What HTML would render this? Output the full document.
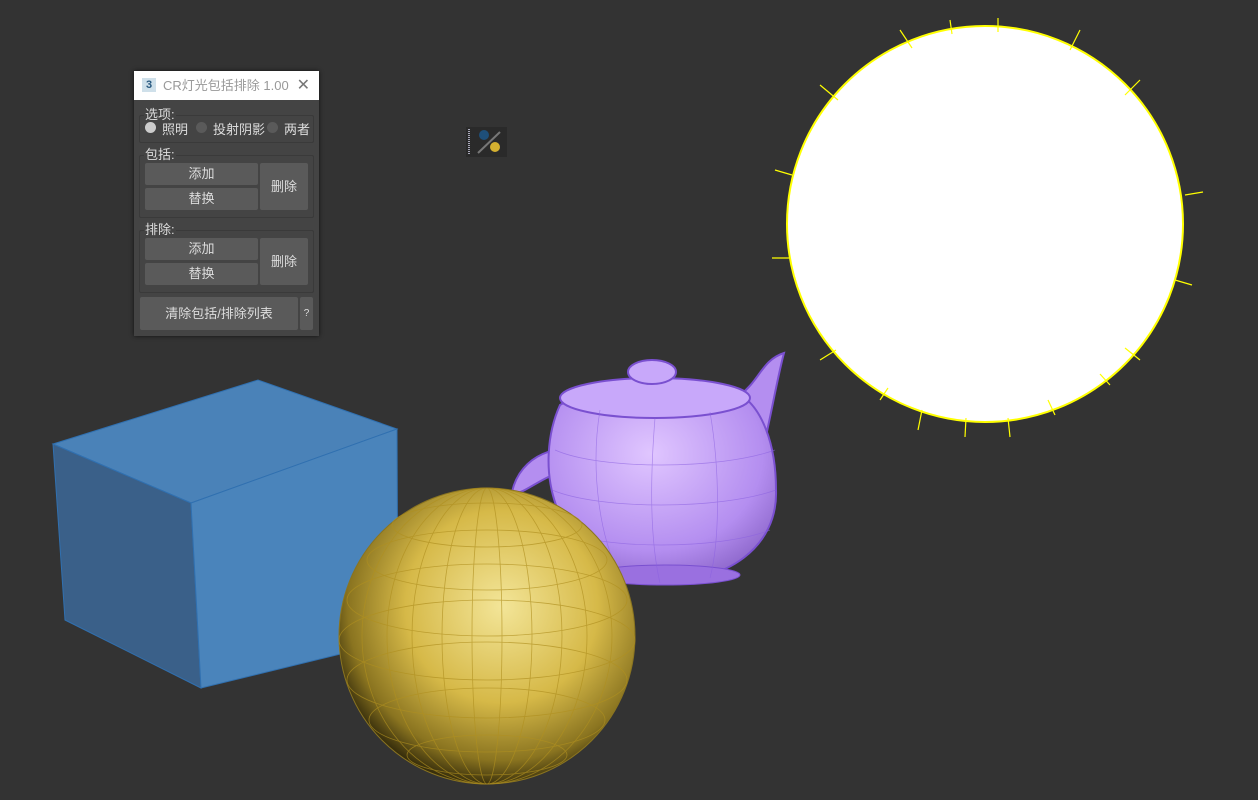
<!DOCTYPE html>
<html><head><meta charset="utf-8"><style>
body{margin:0;width:1258px;height:800px;background:#333;overflow:hidden;position:relative;font-family:"Liberation Sans","Noto Sans CJK SC",sans-serif}
svg{position:absolute;left:0;top:0}
.dlg{position:absolute;left:134px;top:71px;width:185px;height:265px;background:#444;box-shadow:0 0 4px #111}
.tb{height:29px;background:#fff;color:#999;font-size:13px;line-height:29px;position:relative}
.tb .ic{position:absolute;left:8px;top:7px;width:14px;height:14px;background:#cfe0ea;color:#2a5a80;font-size:11px;font-weight:bold;line-height:14px;text-align:center}
.tb .t{position:absolute;left:29px}
.tb .x{position:absolute;right:9px;top:0;color:#777;font-size:16px}
.g{position:absolute;border:1px solid #3a3a3a;border-radius:2px;left:5px;width:173px}
.lb{position:absolute;color:#ddd;font-size:13px;background:#444;padding:0 1px}
.b{position:absolute;background:#5a5a5a;color:#ddd;font-size:13px;text-align:center;border-radius:2px}
.r{position:absolute;width:11px;height:11px;border-radius:50%;background:#5a5a5a;top:51px}
.rt{position:absolute;color:#ddd;font-size:13px;top:48px}
</style></head><body>
<svg width="1258" height="800">
<defs>
<radialGradient id="ys" cx="0.55" cy="0.4" r="0.65"><stop offset="0" stop-color="#f3e598"/><stop offset="0.5" stop-color="#d6b948"/><stop offset="0.8" stop-color="#8a7420"/><stop offset="1" stop-color="#0f0c02"/></radialGradient>
<radialGradient id="pp" cx="0.45" cy="0.35" r="0.7"><stop offset="0" stop-color="#e0c6ff"/><stop offset="0.7" stop-color="#b48ef0"/><stop offset="1" stop-color="#8a64c8"/></radialGradient>
</defs>
<polygon points="53,444 258,380 397,429 191,503" fill="#4a82b8" stroke="#3070b0"/>
<polygon points="53,444 191,503 201,688 65,620" fill="#3a6089" stroke="#3070b0"/>
<polygon points="191,503 397,429 398,640 201,688" fill="#4a84bb" stroke="#3070b0"/>
<!-- teapot -->
<path d="M740,395 C760,380 762,360 784,353 C778,375 772,410 764,445" fill="#b48ef0" stroke="#7a50d0" stroke-width="2"/>
<path d="M590,455 C560,440 520,455 512,492 C522,498 540,475 570,470 Z" fill="#b48ef0" stroke="#7a50d0" stroke-width="2"/>
<path d="M560,405 C535,460 545,560 650,582 C730,585 778,545 776,490 C776,440 760,410 745,398 C700,378 600,380 560,405 Z" fill="url(#pp)" stroke="#7a50d0" stroke-width="2"/>
<ellipse cx="655" cy="398" rx="95" ry="20" fill="#c8a8fa" stroke="#7a50d0" stroke-width="2"/>
<ellipse cx="652" cy="372" rx="24" ry="12" fill="#c8a8fa" stroke="#7a50d0" stroke-width="2"/>
<ellipse cx="665" cy="575" rx="75" ry="10" fill="#9a70e0" stroke="#7a50d0"/>
<g stroke="#8a60e0" stroke-width="0.7" fill="none" opacity="0.6">
<path d="M555,450 C600,470 720,470 775,450"/><path d="M552,490 C600,510 720,510 776,490"/><path d="M560,530 C600,550 720,550 770,530"/>
<path d="M600,410 C590,470 600,540 620,575"/><path d="M655,418 C650,480 650,540 660,583"/><path d="M710,412 C720,470 720,540 710,578"/>
</g>
<!-- sphere -->
<circle cx="487" cy="636" r="148" fill="url(#ys)" stroke="#8a7420"/>
<g stroke="#b09020" stroke-width="0.8" fill="none" opacity="0.7">
<ellipse cx="487" cy="636" rx="15" ry="148"/><ellipse cx="487" cy="636" rx="45" ry="148"/><ellipse cx="487" cy="636" rx="75" ry="148"/><ellipse cx="487" cy="636" rx="100" ry="148"/><ellipse cx="487" cy="636" rx="125" ry="148"/>
<ellipse cx="487" cy="525" rx="95" ry="22"/><ellipse cx="487" cy="560" rx="120" ry="30"/><ellipse cx="487" cy="600" rx="140" ry="36"/><ellipse cx="487" cy="640" rx="148" ry="40"/><ellipse cx="487" cy="680" rx="140" ry="38"/><ellipse cx="487" cy="720" rx="118" ry="32"/><ellipse cx="487" cy="755" rx="80" ry="20"/>
</g>
<!-- sun -->
<circle cx="985" cy="224" r="198" fill="#fff" stroke="#ffff00" stroke-width="2"/>
<g stroke="#ffff00" stroke-width="1.2">
<line x1="998" y1="18" x2="998" y2="32"/><line x1="900" y1="30" x2="912" y2="48"/><line x1="1080" y1="30" x2="1070" y2="50"/>
<line x1="820" y1="85" x2="838" y2="100"/><line x1="1140" y1="80" x2="1125" y2="95"/><line x1="775" y1="170" x2="792" y2="175"/>
<line x1="1185" y1="195" x2="1203" y2="192"/><line x1="772" y1="258" x2="789" y2="258"/><line x1="1175" y1="280" x2="1192" y2="285"/>
<line x1="820" y1="360" x2="836" y2="350"/><line x1="1140" y1="360" x2="1125" y2="348"/><line x1="918" y1="430" x2="922" y2="410"/>
<line x1="965" y1="437" x2="966" y2="418"/><line x1="1010" y1="437" x2="1008" y2="418"/><line x1="1055" y1="415" x2="1048" y2="400"/>
<line x1="880" y1="400" x2="888" y2="388"/><line x1="1110" y1="385" x2="1100" y2="374"/><line x1="950" y1="20" x2="952" y2="34"/>
</g>
<!-- icon -->
<rect x="466" y="127" width="41" height="30" fill="#2a2a2a"/>
<line x1="469" y1="129" x2="469" y2="155" stroke="#aab" stroke-dasharray="1 1" stroke-width="2"/>
<line x1="478" y1="153" x2="500" y2="132" stroke="#777" stroke-width="2"/>
<circle cx="484" cy="135" r="5" fill="#1e4f7a"/>
<circle cx="495" cy="147" r="5" fill="#d4b030"/>
</svg>
<div class="dlg">
<div class="tb"><div class="ic">3</div><span class="t">CR灯光包括排除 1.00</span><span class="x">✕</span></div>
<div class="g" style="top:44px;height:26px"></div><div class="lb" style="left:10px;top:33px">选项:</div>
<div class="r" style="left:11px;background:#ccc;border:0"></div><div class="rt" style="left:28px">照明</div>
<div class="r" style="left:62px"></div><div class="rt" style="left:79px">投射阴影</div>
<div class="r" style="left:133px"></div><div class="rt" style="left:150px">两者</div>
<div class="g" style="top:84px;height:61px"></div><div class="lb" style="left:10px;top:73px">包括:</div>
<div class="b" style="left:11px;top:92px;width:113px;height:22px;line-height:22px">添加</div>
<div class="b" style="left:11px;top:117px;width:113px;height:22px;line-height:22px">替换</div>
<div class="b" style="left:126px;top:92px;width:48px;height:47px;line-height:47px">删除</div>
<div class="g" style="top:159px;height:61px"></div><div class="lb" style="left:10px;top:148px">排除:</div>
<div class="b" style="left:11px;top:167px;width:113px;height:22px;line-height:22px">添加</div>
<div class="b" style="left:11px;top:192px;width:113px;height:22px;line-height:22px">替换</div>
<div class="b" style="left:126px;top:167px;width:48px;height:47px;line-height:47px">删除</div>
<div class="b" style="left:6px;top:226px;width:158px;height:33px;line-height:33px">清除包括/排除列表</div>
<div class="b" style="left:166px;top:226px;width:13px;height:33px;line-height:33px;font-size:10px">?</div>
</div>
</body></html>
